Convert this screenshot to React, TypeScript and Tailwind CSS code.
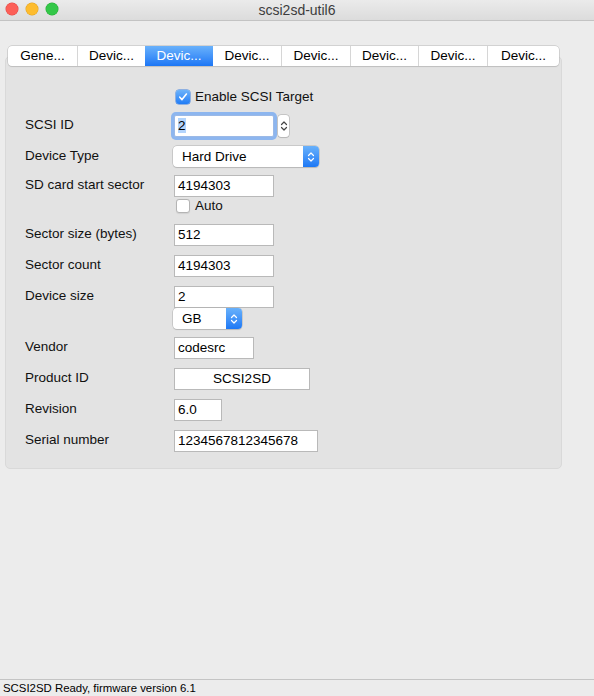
import React from 'react';

const font = { fontFamily: '"Liberation Sans", Arial, sans-serif' };

const tabs = [
  { label: 'Gene...', w: 'w-[69px]' },
  { label: 'Devic...', w: 'w-[68px]' },
  { label: 'Devic...', w: 'w-[68px]', active: true },
  { label: 'Devic...', w: 'w-[68px]' },
  { label: 'Devic...', w: 'w-[69px]' },
  { label: 'Devic...', w: 'w-[68px]' },
  { label: 'Devic...', w: 'w-[69px]' },
  { label: 'Devic...', w: 'w-[72px]' },
];

const Check: React.FC<{ checked?: boolean }> = ({ checked }) =>
  checked ? (
    <span className="flex h-[14px] w-[14px] items-center justify-center rounded-[3px] bg-gradient-to-b from-[#6cb3fa] to-[#1e7cf6] shadow-[0_0_0_0.5px_#3b7fe0]">
      <svg width="10" height="10" viewBox="0 0 10 10">
        <path d="M1.8 5.2 L4 7.6 L8.4 2" fill="none" stroke="white" strokeWidth="1.6" strokeLinecap="round" strokeLinejoin="round" />
      </svg>
    </span>
  ) : (
    <span className="h-[14px] w-[14px] rounded-[3px] border border-[#b4b4b4] bg-white shadow-[0_0.5px_1px_rgba(0,0,0,0.08)]" />
  );

const Field: React.FC<{ value: string; w: string; center?: boolean }> = ({ value, w, center }) => (
  <div
    className={`h-[22px] ${w} border border-[#b9b9b9] bg-white px-[3px] text-[13.5px] leading-[20px] text-black ${center ? 'text-center' : ''}`}
  >
    {value}
  </div>
);

const Chevrons: React.FC<{ color: string }> = ({ color }) => (
  <svg width="8" height="12" viewBox="0 0 8 12">
    <path d="M1.5 4.5 L4 2 L6.5 4.5 M1.5 7.5 L4 10 L6.5 7.5" fill="none" stroke={color} strokeWidth="1.2" strokeLinecap="round" strokeLinejoin="round" />
  </svg>
);

const Select: React.FC<{ value: string; w: string }> = ({ value, w }) => (
  <div className={`flex h-[21px] ${w} overflow-hidden rounded-[4px] bg-white shadow-[0_0_0_0.5px_#b0b0b0,0_1px_1px_rgba(0,0,0,0.15)]`}>
    <span className="flex-1 pl-[9px] text-[13.5px] leading-[21px] text-black">{value}</span>
    <span className="flex w-[16px] items-center justify-center bg-gradient-to-b from-[#68b1fb] to-[#1c78f5]">
      <Chevrons color="white" />
    </span>
  </div>
);

const Row: React.FC<{ label: string; mt: string; children: React.ReactNode }> = ({ label, mt, children }) => (
  <div className={`flex items-start ${mt}`}>
    <div className="w-[149px] text-[13.5px] leading-[20px] text-[#111]">{label}</div>
    <div className="flex flex-col items-start">{children}</div>
  </div>
);

export default function App() {
  return (
    <div className="flex h-[696px] w-[594px] flex-col bg-[#ececec]" style={font}>
      {/* title bar */}
      <div className="relative flex h-[21px] items-center justify-center border-b border-[#c3c3c3] bg-gradient-to-b from-[#ebebeb] to-[#dcdcdc]">
        <div className="absolute left-[6px] top-[3px] flex gap-[8px]">
          <span className="h-[12px] w-[12px] rounded-full bg-[#fc5f57] shadow-[0_0_0_0.5px_#df4744]" />
          <span className="h-[12px] w-[12px] rounded-full bg-[#fdbc2e] shadow-[0_0_0_0.5px_#dea123]" />
          <span className="h-[12px] w-[12px] rounded-full bg-[#33c748] shadow-[0_0_0_0.5px_#27aa35]" />
        </div>
        <span className="text-[14px] text-[#3c3c3c]">scsi2sd-util6</span>
      </div>

      {/* tab bar */}
      <div className="relative z-10 ml-[8px] mt-[25px] -mb-[10px] flex h-[20px] w-fit overflow-hidden rounded-[4px] bg-white shadow-[0_0_0_0.5px_#b8b8b8,0_1px_1px_rgba(0,0,0,0.12)]">
        {tabs.map((t, i) => (
          <div
            key={i}
            className={`${t.w} flex items-center justify-center text-[13.5px] ${
              t.active
                ? 'bg-gradient-to-b from-[#69b1fb] to-[#1b76f5] text-white'
                : `text-black ${i > 0 && !tabs[i - 1].active ? 'border-l border-[#d6d6d6]' : ''}`
            }`}
          >
            {t.label}
          </div>
        ))}
      </div>

      {/* panel */}
      <div className="ml-[5px] h-[413px] w-[557px] rounded-[5px] border border-[#d9d9d9] bg-[#e3e3e3] pl-[19px]">
        <div className="ml-[151px] mt-[33px] flex h-[14px] items-center gap-[5px]">
          <Check checked />
          <span className="text-[13.5px] leading-[14px] text-[#111]">Enable SCSI Target</span>
        </div>

        <Row label="SCSI ID" mt="mt-[11px]">
          <div className="flex h-[22px] items-center gap-[3px]">
            <div className="h-[22px] w-[100px] rounded-[2px] border border-[#9bb9e6] bg-white px-[3px] text-[13.5px] leading-[20px] text-black shadow-[0_0_0_3px_#8db6ef]">
              <span className="bg-[#b3d4fc]">2</span>
            </div>
            <div className="ml-[1px] flex h-[22px] w-[11px] items-center justify-center rounded-[3px] bg-white shadow-[0_0_0_0.5px_#a8a8a8,0_1px_1px_rgba(0,0,0,0.12)]">
              <Chevrons color="#444" />
            </div>
          </div>
        </Row>

        <Row label="Device Type" mt="mt-[9px]">
          <div className="-ml-[1px]">
            <Select value="Hard Drive" w="w-[146px]" />
          </div>
        </Row>

        <Row label="SD card start sector" mt="mt-[8px]">
          <Field value="4194303" w="w-[100px]" />
          <div className="ml-[2px] mt-[2px] flex h-[14px] items-center gap-[5px]">
            <Check />
            <span className="text-[13.5px] leading-[14px] text-[#111]">Auto</span>
          </div>
        </Row>

        <Row label="Sector size (bytes)" mt="mt-[11px]">
          <Field value="512" w="w-[100px]" />
        </Row>

        <Row label="Sector count" mt="mt-[9px]">
          <Field value="4194303" w="w-[100px]" />
        </Row>

        <Row label="Device size" mt="mt-[9px]">
          <Field value="2" w="w-[100px]" />
          <div className="-ml-[1px]">
            <Select value="GB" w="w-[69px]" />
          </div>
        </Row>

        <Row label="Vendor" mt="mt-[8px]">
          <Field value="codesrc" w="w-[80px]" />
        </Row>

        <Row label="Product ID" mt="mt-[9px]">
          <Field value="SCSI2SD" w="w-[136px]" center />
        </Row>

        <Row label="Revision" mt="mt-[9px]">
          <Field value="6.0" w="w-[48px]" />
        </Row>

        <Row label="Serial number" mt="mt-[9px]">
          <Field value="1234567812345678" w="w-[144px]" />
        </Row>
      </div>

      <div className="flex-1" />

      {/* status bar */}
      <div className="h-[17px] border-t border-[#c4c4c4] pl-[3px] text-[11.4px] leading-[16px] text-black">
        SCSI2SD Ready, firmware version 6.1
      </div>
    </div>
  );
}
